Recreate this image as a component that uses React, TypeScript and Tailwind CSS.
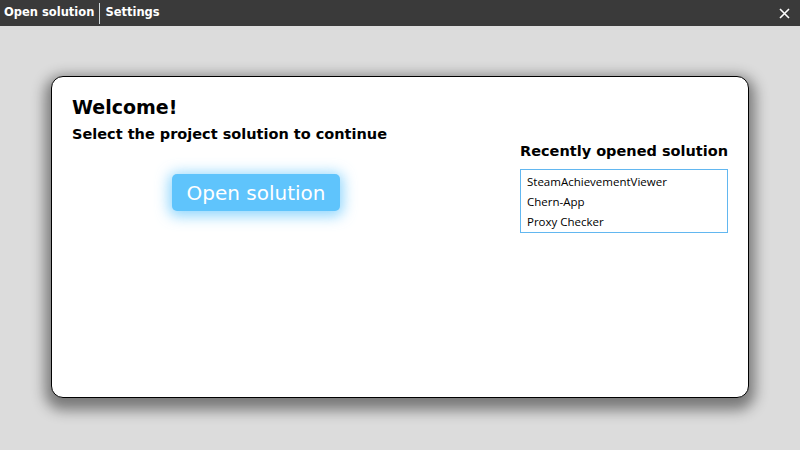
import React from "react";

const heavy = { fontFamily: '"DejaVu Sans", Verdana, sans-serif' };

export default function App() {
  return (
    <div className="w-[800px] h-[450px] bg-[#dcdcdc] flex flex-col overflow-hidden" style={{ fontFamily: '"Liberation Sans", Arial, sans-serif' }}>
      <div className="h-[26px] bg-[#3a3a3a] flex items-center justify-between shrink-0">
        <div className="flex items-center h-full">
          <span className="text-white font-bold text-[11.5px] pl-[4px] pr-[5px]" style={heavy}>Open solution</span>
          <div className="w-px h-[21px] bg-[#cfd8dc]" />
          <span className="text-white font-bold text-[11.5px] pl-[5px]" style={heavy}>Settings</span>
        </div>
        <svg width="11" height="11" viewBox="0 0 11 11" className="mr-[10px]">
          <path d="M1 1 L10 10 M10 1 L1 10" stroke="white" strokeWidth="1.6" />
        </svg>
      </div>
      <div className="flex-1 pt-[50px] px-[51px] pb-[51px]">
        <div className="h-[322px] bg-white border border-black rounded-[12px] shadow-[0_6px_14px_6px_rgba(0,0,0,0.45)] flex justify-between pl-[20px] pr-[20px]">
          <div className="flex flex-col">
            <div className="text-[19px] font-bold text-black mt-[18px] leading-[24px]" style={heavy}>Welcome!</div>
            <div className="text-[14.5px] font-bold text-black leading-[18px] mt-[6px]" style={heavy}>Select the project solution to continue</div>
            <div className="mt-[31px] ml-[100px]">
              <button className="w-[168px] h-[37px] bg-[#5fc4fc] rounded-[5px] text-white text-[20px] shadow-[0_2px_14px_3px_rgba(95,196,252,0.7)]" style={heavy}>Open solution</button>
            </div>
          </div>
          <div className="flex flex-col mt-[65px] w-[208px]">
            <div className="text-[14.5px] font-bold text-black leading-[18px] whitespace-nowrap" style={heavy}>Recently opened solution</div>
            <div className="mt-[9px] border border-[#62b7f0] h-[64px] pl-[6px] pt-[2px] text-[11.5px] text-black" style={{ fontFamily: '"Open Sans", "Noto Sans", sans-serif' }}>
              <div className="h-[20px] leading-[20px]">SteamAchievementViewer</div>
              <div className="h-[20px] leading-[20px]">Chern-App</div>
              <div className="h-[20px] leading-[20px]">Proxy Checker</div>
            </div>
          </div>
        </div>
      </div>
    </div>
  );
}
